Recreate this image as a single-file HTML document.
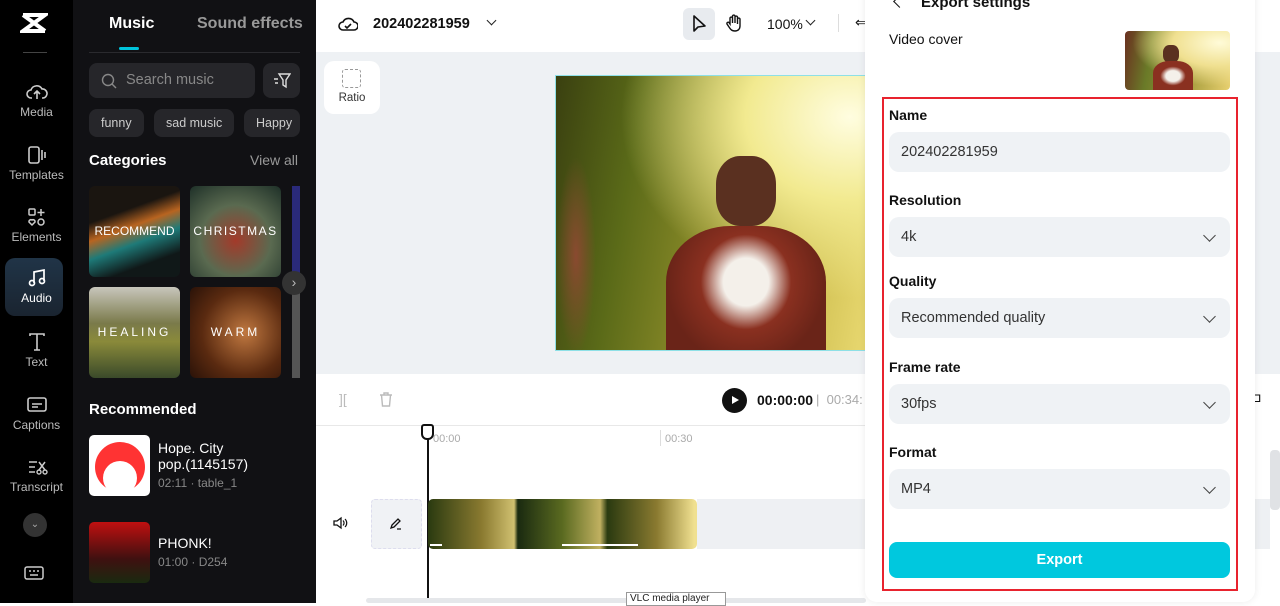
<!DOCTYPE html>
<html><head><meta charset="utf-8"><style>
*{box-sizing:border-box;margin:0;padding:0}
body{width:1280px;height:603px;overflow:hidden;position:relative;font-family:"Liberation Sans",sans-serif;background:#fff}
.abs{position:absolute}
#rail{left:0;top:0;width:73px;height:603px;background:#000}
.ri{position:absolute;left:0;width:73px;text-align:center;color:#bbb;font-size:12px}
.ri svg{display:block;margin:0 auto 3px}
#panel{left:73px;top:0;width:243px;height:603px;background:#111114;color:#fff}
.chip{position:absolute;top:109px;height:28px;border-radius:8px;background:#26262a;color:#ccc;font-size:12.5px;line-height:28px;padding:0 12px}
.cat{position:absolute;width:91px;height:91px;border-radius:6px;color:#fff;font-size:12px;letter-spacing:2px;text-align:center;line-height:91px;overflow:hidden}
.lbl{font-size:14px;font-weight:bold;color:#111;position:absolute;left:889px}
.fld{position:absolute;left:889px;width:341px;height:40px;border-radius:10px;background:#eff2f5;color:#333;font-size:14.5px;line-height:40px;padding-left:12px}
.chev{position:absolute;right:16px;top:14px;width:9px;height:9px;border-right:1.5px solid #444;border-bottom:1.5px solid #444;transform:rotate(45deg)}
</style></head><body>
<div id="rail" class="abs">
 <svg class="abs" style="left:20px;top:12px" width="28" height="22" viewBox="0 0 28 22"><path d="M3 3h22L3 19h22" stroke="#fff" stroke-width="4" fill="none"/><path d="M3 3l22 16" stroke="#fff" stroke-width="4"/></svg>
 <div class="abs" style="left:23px;top:52px;width:24px;height:1px;background:#444"></div>
 <div class="ri" style="top:82px"><svg width="22" height="20" viewBox="0 0 22 20"><path d="M6 16H5a4 4 0 010-8 6 6 0 0111-1 4 4 0 011 9h-1M11 17V9M8 12l3-3 3 3" stroke="#ccc" stroke-width="1.6" fill="none"/></svg>Media</div>
 <div class="ri" style="top:145px"><svg width="22" height="20" viewBox="0 0 22 20"><rect x="3" y="2" width="10" height="16" rx="2" stroke="#ccc" stroke-width="1.6" fill="none"/><path d="M16 5v10M19 7v6" stroke="#ccc" stroke-width="1.6"/></svg>Templates</div>
 <div class="ri" style="top:207px"><svg width="22" height="20" viewBox="0 0 22 20"><rect x="3" y="2" width="6" height="6" rx="1" stroke="#ccc" stroke-width="1.5" fill="none"/><path d="M15 2v7M11.5 5.5h7" stroke="#ccc" stroke-width="1.5"/><circle cx="15" cy="15" r="3" stroke="#ccc" stroke-width="1.5" fill="none"/><path d="M6 18l-3-3a2 2 0 013-2 2 2 0 013 2z" stroke="#ccc" stroke-width="1.5" fill="none"/></svg>Elements</div>
 <div class="abs" style="left:5px;top:258px;width:58px;height:58px;border-radius:10px;background:linear-gradient(#203447,#1a2430)"></div>
 <div class="ri" style="top:268px;color:#fff"><svg width="22" height="20" viewBox="0 0 22 20"><path d="M8 15V4l10-2v11" stroke="#fff" stroke-width="1.7" fill="none"/><circle cx="6" cy="15" r="2.5" stroke="#fff" stroke-width="1.7" fill="none"/><circle cx="16" cy="13" r="2.5" stroke="#fff" stroke-width="1.7" fill="none"/></svg>Audio</div>
 <div class="ri" style="top:332px"><svg width="22" height="20" viewBox="0 0 22 20"><path d="M4 4V2h14v2M11 2v16M8 18h6" stroke="#ccc" stroke-width="1.6" fill="none"/></svg>Text</div>
 <div class="ri" style="top:395px"><svg width="22" height="20" viewBox="0 0 22 20"><rect x="2" y="3" width="18" height="13" rx="2" stroke="#ccc" stroke-width="1.6" fill="none"/><path d="M6 9h10M6 12h6" stroke="#ccc" stroke-width="1.6"/></svg>Captions</div>
 <div class="ri" style="top:457px"><svg width="22" height="20" viewBox="0 0 22 20"><path d="M3 5h8M3 10h6M3 15h6M13 5l6 8M19 5l-6 8" stroke="#ccc" stroke-width="1.5" fill="none"/><circle cx="13" cy="15" r="2" stroke="#ccc" stroke-width="1.4" fill="none"/><circle cx="19" cy="15" r="2" stroke="#ccc" stroke-width="1.4" fill="none"/></svg>Transcript</div>
 <div class="abs" style="left:23px;top:513px;width:24px;height:24px;border-radius:50%;background:#333;color:#aaa;font-size:10px;text-align:center;line-height:24px">⌄</div>
 <svg class="abs" style="left:24px;top:565px" width="20" height="16" viewBox="0 0 20 16"><rect x="1" y="2" width="18" height="12" rx="2" stroke="#ccc" stroke-width="1.5" fill="none"/><path d="M5 6h2M9 6h2M13 6h2M6 10h8" stroke="#ccc" stroke-width="1.5"/></svg>
</div>
<div id="panel" class="abs">
 <div class="abs" style="left:36px;top:15px;font-size:16px;font-weight:bold">Music</div>
 <div class="abs" style="left:124px;top:15px;font-size:16px;font-weight:bold;color:#999">Sound effects</div>
 <div class="abs" style="left:46px;top:47px;width:20px;height:3px;background:#00c4dc;border-radius:2px"></div>
 <div class="abs" style="left:16px;top:52px;width:211px;height:1px;background:#2a2a2e"></div>
 <div class="abs" style="left:16px;top:63px;width:166px;height:35px;border-radius:8px;background:#26262a;color:#888;font-size:14.5px;line-height:35px;padding-left:37px">Search music</div>
 <svg class="abs" style="left:28px;top:73px" width="16" height="16" viewBox="0 0 16 16"><circle cx="7" cy="7" r="5.5" stroke="#888" stroke-width="1.4" fill="none"/><path d="M11 11l4 4" stroke="#888" stroke-width="1.4"/></svg>
 <div class="abs" style="left:190px;top:63px;width:37px;height:35px;border-radius:8px;background:#26262a"></div>
 <svg class="abs" style="left:200px;top:72px" width="18" height="17" viewBox="0 0 18 17"><path d="M6 2h11l-4 6v7l-3-2V8z" stroke="#ddd" stroke-width="1.4" fill="none"/><path d="M1 7h4M2 11h3" stroke="#ddd" stroke-width="1.4"/></svg>
 <div class="chip" style="left:16px">funny</div>
 <div class="chip" style="left:81px">sad music</div>
 <div class="chip" style="left:171px;width:56px;overflow:hidden">Happy</div>
 <div class="abs" style="left:16px;top:152px;font-size:15px;font-weight:bold">Categories</div>
 <div class="abs" style="left:177px;top:152px;font-size:14px;color:#999">View all</div>
 <div class="cat" style="left:16px;top:186px;letter-spacing:0;background:linear-gradient(160deg,#1a1510 30%,#b86420 45%,#1e7a78 60%,#101818 80%)">RECOMMEND</div>
 <div class="cat" style="left:117px;top:186px;letter-spacing:1.5px;background:radial-gradient(circle at 50% 60%,#a33a2a,#5a6a50 50%,#1e3028)">CHRISTMAS</div>
 <div class="abs" style="left:219px;top:186px;width:8px;height:91px;background:#2a2a7a"></div>
 <div class="cat" style="left:16px;top:287px;letter-spacing:3px;background:linear-gradient(#c8c6bc,#7a7a4a 40%,#8a8a3a 60%,#3a4a2a)">HEALING</div>
 <div class="cat" style="left:117px;top:287px;letter-spacing:3px;background:radial-gradient(circle at 60% 50%,#c07840,#5a2a10 60%,#2a1208)">WARM</div>
 <div class="abs" style="left:219px;top:287px;width:8px;height:91px;background:#555"></div>
 <div class="abs" style="left:209px;top:271px;width:24px;height:24px;border-radius:50%;background:#333;color:#bbb;text-align:center;line-height:22px;font-size:14px">›</div>
 <div class="abs" style="left:16px;top:401px;font-size:15px;font-weight:bold">Recommended</div>
 <div class="abs" style="left:16px;top:435px;width:61px;height:61px;border-radius:5px;background:#fff;overflow:hidden">
  <div class="abs" style="left:6px;top:7px;width:50px;height:50px;border-radius:50%;background:#f33"></div>
  <div class="abs" style="left:14px;top:26px;width:34px;height:34px;border-radius:50%;background:#fff"></div>
 </div>
 <div class="abs" style="left:85px;top:440px;font-size:14px;line-height:16px">Hope. City<br>pop.(1145157)</div>
 <div class="abs" style="left:85px;top:476px;font-size:12px;color:#888">02:11 · table_1</div>
 <div class="abs" style="left:16px;top:522px;width:61px;height:61px;border-radius:5px;background:linear-gradient(#c01010,#401010 60%,#1a2a10)"></div>
 <div class="abs" style="left:85px;top:535px;font-size:14px">PHONK!</div>
 <div class="abs" style="left:85px;top:555px;font-size:12px;color:#888">01:00 · D254</div>
</div>
<div class="abs" style="left:316px;top:278px;width:6px;height:50px;background:#2a2a2e;border-radius:0 4px 4px 0"></div>
<!-- top bar -->
<svg class="abs" style="left:338px;top:15px" width="20" height="18" viewBox="0 0 20 18"><path d="M5 15a4 4 0 010-8 6 6 0 0111 0 4 4 0 010 8z" stroke="#111" stroke-width="1.6" fill="none"/><path d="M7 11l2 2 4-4" stroke="#111" stroke-width="1.6" fill="none"/></svg>
<div class="abs" style="left:373px;top:16px;font-size:14.5px;font-weight:bold;color:#111">202402281959</div>
<div class="abs" style="left:488px;top:17px;width:7px;height:7px;border-right:1.5px solid #222;border-bottom:1.5px solid #222;transform:rotate(45deg)"></div>
<div class="abs" style="left:683px;top:8px;width:32px;height:32px;border-radius:6px;background:#e8ebef"></div>
<svg class="abs" style="left:690px;top:14px" width="18" height="20" viewBox="0 0 18 20"><path d="M4 2v15l4-4 7-1z" stroke="#111" stroke-width="1.6" fill="none" stroke-linejoin="round"/></svg>
<svg class="abs" style="left:725px;top:13px" width="18" height="20" viewBox="0 0 18 20"><path d="M5 11V5a1.3 1.3 0 012.5 0v5V3a1.3 1.3 0 012.5 0v7V4a1.3 1.3 0 012.5 0v7V6a1.3 1.3 0 012.5 0v7c0 3-2 5-5 5-3 0-4-1-6-4l-2-3a1.3 1.3 0 012-1.5z" stroke="#111" stroke-width="1.4" fill="none"/></svg>
<div class="abs" style="left:767px;top:16px;font-size:14px;color:#111">100%</div>
<div class="abs" style="left:807px;top:17px;width:7px;height:7px;border-right:1.5px solid #222;border-bottom:1.5px solid #222;transform:rotate(45deg)"></div>
<div class="abs" style="left:838px;top:14px;width:1px;height:18px;background:#ddd"></div>
<div class="abs" style="left:855px;top:14px;font-size:14px;color:#111">⇐</div>
<!-- canvas -->
<div class="abs" style="left:316px;top:52px;width:964px;height:322px;background:#eef1f4"></div>
<div class="abs" style="left:324px;top:61px;width:56px;height:53px;border-radius:10px;background:#fff"></div>
<div class="abs" style="left:342px;top:69px;width:19px;height:19px;border:1.5px dashed #999;border-radius:3px"></div>
<div class="abs" style="left:324px;top:92px;width:56px;text-align:center;font-size:11.5px;color:#333">Ratio</div>
<div class="abs" style="left:555px;top:75px;width:311px;height:276px;border:1.5px solid #8ee0e6;overflow:hidden;background:radial-gradient(ellipse at 95% 15%,#fffde0,#f2ea90 25%,transparent 55%),linear-gradient(100deg,#3a4010,#5a6a18 25%,#8a8a28 50%,#c8b848 75%,#e8d870)">
 <div class="abs" style="left:0;top:80px;width:40px;height:200px;background:radial-gradient(ellipse,#8a4a30,transparent 70%)"></div>
 <div class="abs" style="left:160px;top:80px;width:60px;height:70px;border-radius:40%;background:#5a3020"></div>
 <div class="abs" style="left:110px;top:150px;width:160px;height:140px;border-radius:40% 40% 0 0;background:radial-gradient(ellipse at 50% 40%,#f4f0ea 20%,#8a3020 40%,#6a2418 70%)"></div>
</div>
<!-- toolbar -->
<div class="abs" style="left:316px;top:374px;width:964px;height:52px;background:#fff;border-bottom:1px solid #e8e8e8"></div>
<div class="abs" style="left:339px;top:391px;color:#bbb;font-size:14px">][</div>
<svg class="abs" style="left:378px;top:391px" width="16" height="17" viewBox="0 0 16 17"><path d="M2 4h12M6 4V2h4v2M3.5 4l1 11h7l1-11" stroke="#bbb" stroke-width="1.4" fill="none"/></svg>
<div class="abs" style="left:722px;top:388px;width:25px;height:25px;border-radius:50%;background:#111"></div>
<div class="abs" style="left:732px;top:396px;width:0;height:0;border-left:7px solid #fff;border-top:4.5px solid transparent;border-bottom:4.5px solid transparent"></div>
<div class="abs" style="left:757px;top:392px;font-size:14px;font-weight:bold;color:#111">00:00:00</div>
<div class="abs" style="left:816px;top:392px;font-size:13px;color:#aaa">|&nbsp; 00:34:</div>
<!-- timeline -->
<div class="abs" style="left:433px;top:433px;font-size:11px;color:#aaa">00:00</div>
<div class="abs" style="left:660px;top:430px;width:1px;height:16px;background:#ddd"></div>
<div class="abs" style="left:665px;top:433px;font-size:11px;color:#aaa">00:30</div>
<div class="abs" style="left:427px;top:426px;width:2px;height:172px;background:#111"></div>
<div class="abs" style="left:421px;top:424px;width:13px;height:16px;border:2px solid #111;border-radius:3px 3px 6px 6px;background:#fff"></div>
<svg class="abs" style="left:332px;top:516px" width="16" height="14" viewBox="0 0 16 14"><path d="M2 5h3l4-3v10l-4-3H2z" stroke="#111" stroke-width="1.3" fill="none"/><path d="M11 4.5a3.5 3.5 0 010 5M13 3a5.5 5.5 0 010 8" stroke="#111" stroke-width="1.2" fill="none"/></svg>
<div class="abs" style="left:371px;top:499px;width:51px;height:50px;border:1px dashed #dde;border-radius:4px;background:#f0f2f5"></div>
<svg class="abs" style="left:388px;top:516px" width="16" height="16" viewBox="0 0 16 16"><path d="M3 12l1-3 6-6 2 2-6 6zM9 13h4" stroke="#111" stroke-width="1.3" fill="none"/></svg>
<div class="abs" style="left:697px;top:499px;width:170px;height:50px;background:#eef0f3"></div>
<div class="abs" style="left:428px;top:499px;width:269px;height:50px;border-radius:5px;overflow:hidden;background:linear-gradient(90deg,#2a3a10,#8a7a30 20%,#d0c070 32%,#1a2a10 33.4%,#5a6a20 50%,#c0b060 64%,#2a3a10 66.7%,#8a7a30 85%,#f0e090 99%)"></div>
<div class="abs" style="left:562px;top:544px;width:76px;height:2px;background:#fff"></div>
<div class="abs" style="left:430px;top:544px;width:12px;height:2px;background:#fff"></div>
<div class="abs" style="left:366px;top:598px;width:500px;height:5px;background:#e5e7ea;border-radius:3px"></div>
<div class="abs" style="left:626px;top:592px;width:100px;height:14px;border:1px solid #999;background:#fff;font-size:10px;padding-left:3px;color:#222">VLC media player</div>
<!-- right strip -->
<div class="abs" style="left:1255px;top:0;width:25px;height:52px;background:#fff"></div>
<div class="abs" style="left:1255px;top:374px;width:25px;height:229px;background:#fff"></div>
<div class="abs" style="left:1270px;top:450px;width:10px;height:60px;background:#e0e2e5;border-radius:4px"></div>
<div class="abs" style="left:1255px;top:499px;width:15px;height:50px;background:#eef0f3"></div>
<div class="abs" style="left:1250px;top:389px;font-size:14px;color:#111">⊐</div>
<!-- export panel -->
<div class="abs" style="left:865px;top:-10px;width:390px;height:612px;background:#fff;border-radius:0 0 12px 12px;box-shadow:0 0 8px rgba(0,0,0,.08)"></div>
<div class="abs" style="left:895px;top:-3px;width:9px;height:9px;border-left:1.6px solid #111;border-bottom:1.6px solid #111;transform:rotate(45deg)"></div>
<div class="abs" style="left:921px;top:-6px;font-size:15px;font-weight:bold;color:#111">Export settings</div>
<div class="abs" style="left:889px;top:31px;font-size:14px;color:#111">Video cover</div>
<div class="abs" style="left:1125px;top:31px;width:105px;height:59px;border-radius:4px;overflow:hidden;background:radial-gradient(ellipse at 90% 20%,#fffbd8,#f0e090 35%,transparent 65%),linear-gradient(100deg,#6a3020,#6a7a28 25%,#a09838 60%,#e8d070)">
 <div class="abs" style="left:38px;top:14px;width:16px;height:18px;border-radius:40%;background:#5a3020"></div>
 <div class="abs" style="left:28px;top:30px;width:40px;height:30px;border-radius:40% 40% 0 0;background:radial-gradient(ellipse at 50% 50%,#f4f0ea 25%,#8a3020 45%)"></div>
</div>
<div class="abs" style="left:882px;top:97px;width:356px;height:494px;border:2px solid #e8232e"></div>
<div class="lbl" style="top:107px">Name</div>
<div class="fld" style="top:132px">202402281959</div>
<div class="lbl" style="top:192px">Resolution</div>
<div class="fld" style="top:217px">4k<div class="chev"></div></div>
<div class="lbl" style="top:273px">Quality</div>
<div class="fld" style="top:298px">Recommended quality<div class="chev"></div></div>
<div class="lbl" style="top:359px">Frame rate</div>
<div class="fld" style="top:384px">30fps<div class="chev"></div></div>
<div class="lbl" style="top:444px">Format</div>
<div class="fld" style="top:469px">MP4<div class="chev"></div></div>
<div class="abs" style="left:889px;top:542px;width:341px;height:36px;border-radius:8px;background:#00c8de;color:#fff;font-size:14.5px;font-weight:bold;text-align:center;line-height:36px">Export</div>
</body></html>
